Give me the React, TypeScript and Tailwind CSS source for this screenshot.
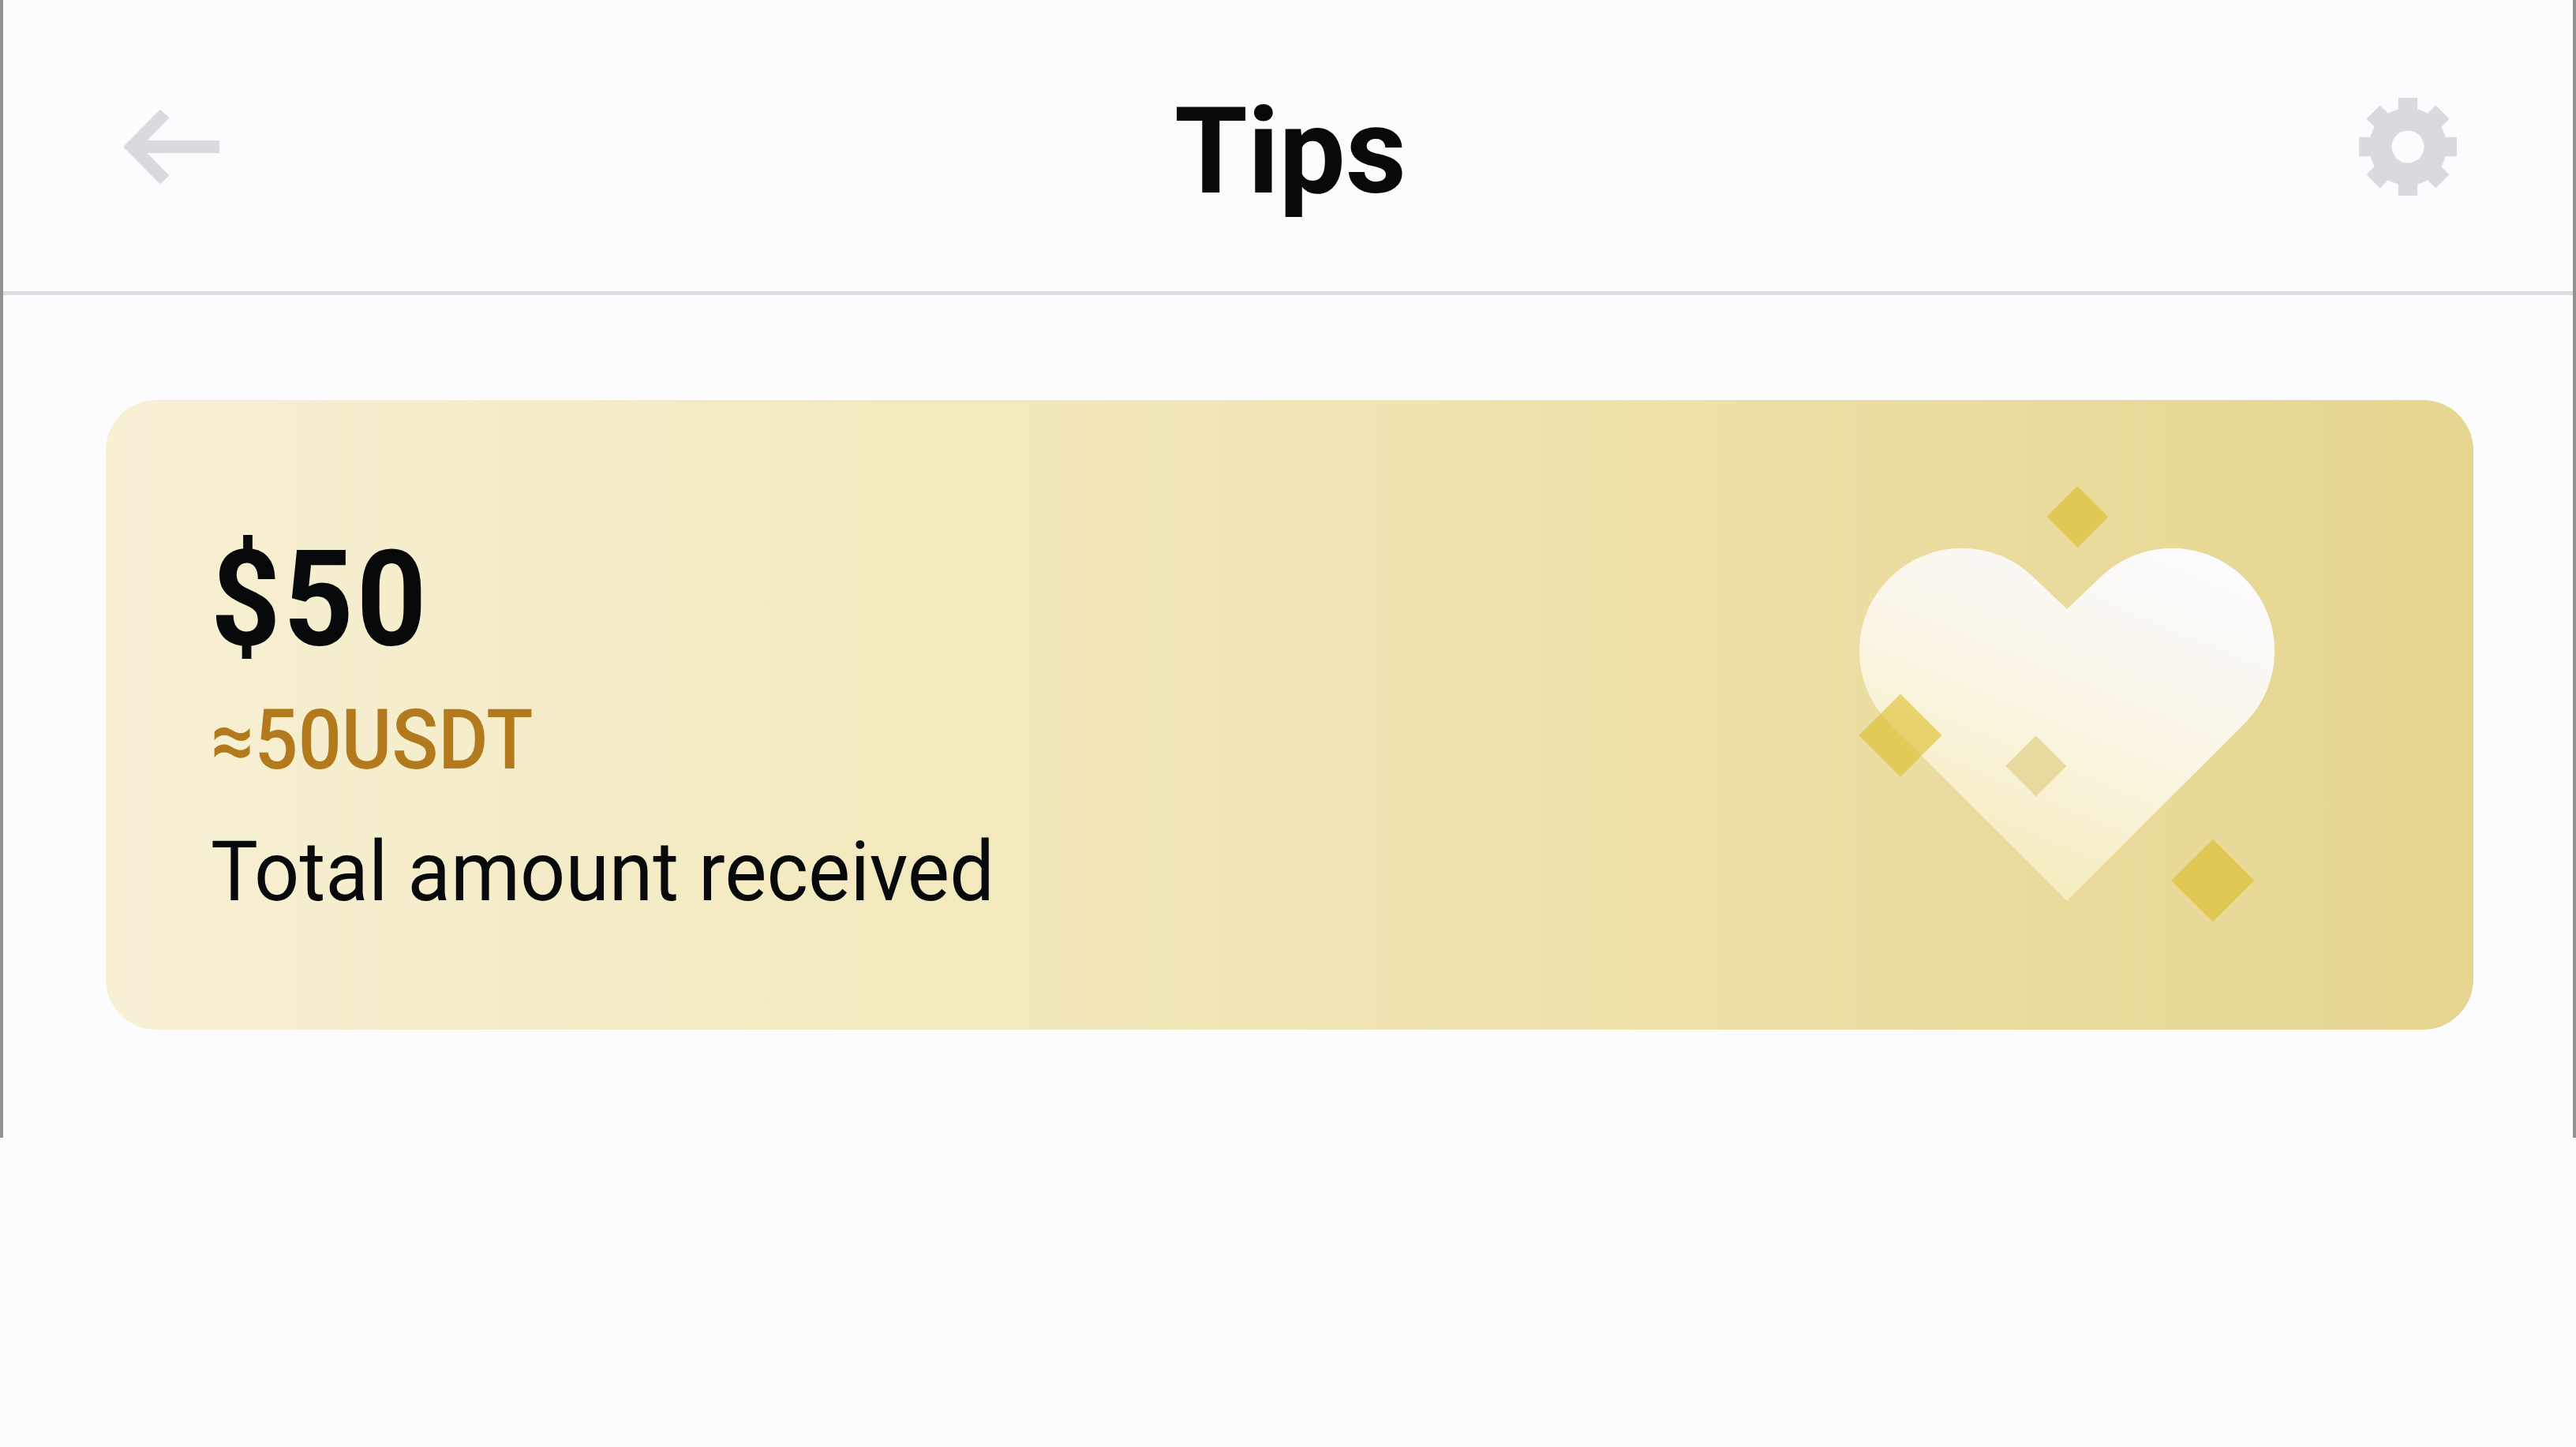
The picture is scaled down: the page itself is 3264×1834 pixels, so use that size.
const TEETH = [0, 45, 90, 135];

function BackArrow() {
  return (
    <svg className="h-[96px] w-[124px]" viewBox="0 0 124 96" fill="#d8dade">
      <path d="M0 48 47 0.5 58.5 11.5 30.5 40H122V56H30.5L58.5 84.5 47 95.5Z" />
    </svg>
  );
}

function Gear() {
  return (
    <svg className="size-[124px]" viewBox="-62 -62 124 124" fill="#d8dade">
      {TEETH.map((angle) => (
        <rect key={angle} x="-12.2" y="-62" width="24.4" height="124" transform={`rotate(${angle})`} />
      ))}
      <circle r="49" />
      <circle r="20.5" fill="#fcfcfe" />
    </svg>
  );
}

function HeartArt() {
  return (
    <svg className="h-[560px] w-[540px]" viewBox="2350 610 540 560">
      <defs>
        <linearGradient id="heart" gradientUnits="userSpaceOnUse" x1="2770" y1="710" x2="2590" y2="1144">
          <stop offset="0" stopColor="#fbfafd" />
          <stop offset="0.5" stopColor="#faf5e4" />
          <stop offset="1" stopColor="#f5ecbd" />
        </linearGradient>
      </defs>
      <path
        fill="url(#heart)"
        d="M2619 1141.5 2394 917A130 130 0 1 1 2578 733L2619 772 2660 733A130 130 0 1 1 2844 917Z"
      />
      <path fill="#e0c855" d="M2632.3 616l39 39-39 39-39-39z" />
      <path fill="#d9b919" fillOpacity="0.55" d="M2408 879.5l52.5 52.5-52.5 52.5-52.5-52.5z" />
      <path fill="#e8da9f" d="M2579.7 932.5l38.5 38.5-38.5 38.5-38.5-38.5z" />
      <path fill="#e0c855" d="M2803.7 1063.5l52.5 52.5-52.5 52.5-52.5-52.5z" />
    </svg>
  );
}

export default function App() {
  return (
    <div className="h-[1834px] w-[3264px] overflow-hidden bg-[#fcfcfe] font-['Roboto',sans-serif] text-[#08090a]">
      <div className="h-[1442px] border-x-4 border-[#929292]">
        <header className="flex h-[374px] items-center justify-between border-b-5 border-[#dcdde1] pt-[3px] pr-[147px] pl-[152px]">
          <BackArrow />
          <h1 className="scale-x-[0.98] pt-[11px] text-[153px] leading-[180px] font-bold">Tips</h1>
          <Gear />
        </header>

        <section className="mt-[133px] mr-[126px] ml-[130px] flex h-[798px] justify-between rounded-[64px] bg-linear-to-r from-[#f7f0d4] via-[#f0e6b4] to-[#e6d590] pr-[244px] pl-[133px]">
          <div className="flex flex-col items-start pt-[158px] whitespace-nowrap">
            <p className="origin-left scale-x-[0.92] text-[168px] leading-[190px] font-bold tracking-[4px]">$50</p>
            <p className="mt-[9px] origin-left scale-x-[0.925] text-[105px] leading-[150px] font-medium text-[#b27a1c]">
              ≈50USDT
            </p>
            <p className="mt-px origin-left scale-x-[0.948] text-[106px] leading-[180px]">Total amount received</p>
          </div>
          <div className="pt-[103px]">
            <HeartArt />
          </div>
        </section>
      </div>
    </div>
  );
}
